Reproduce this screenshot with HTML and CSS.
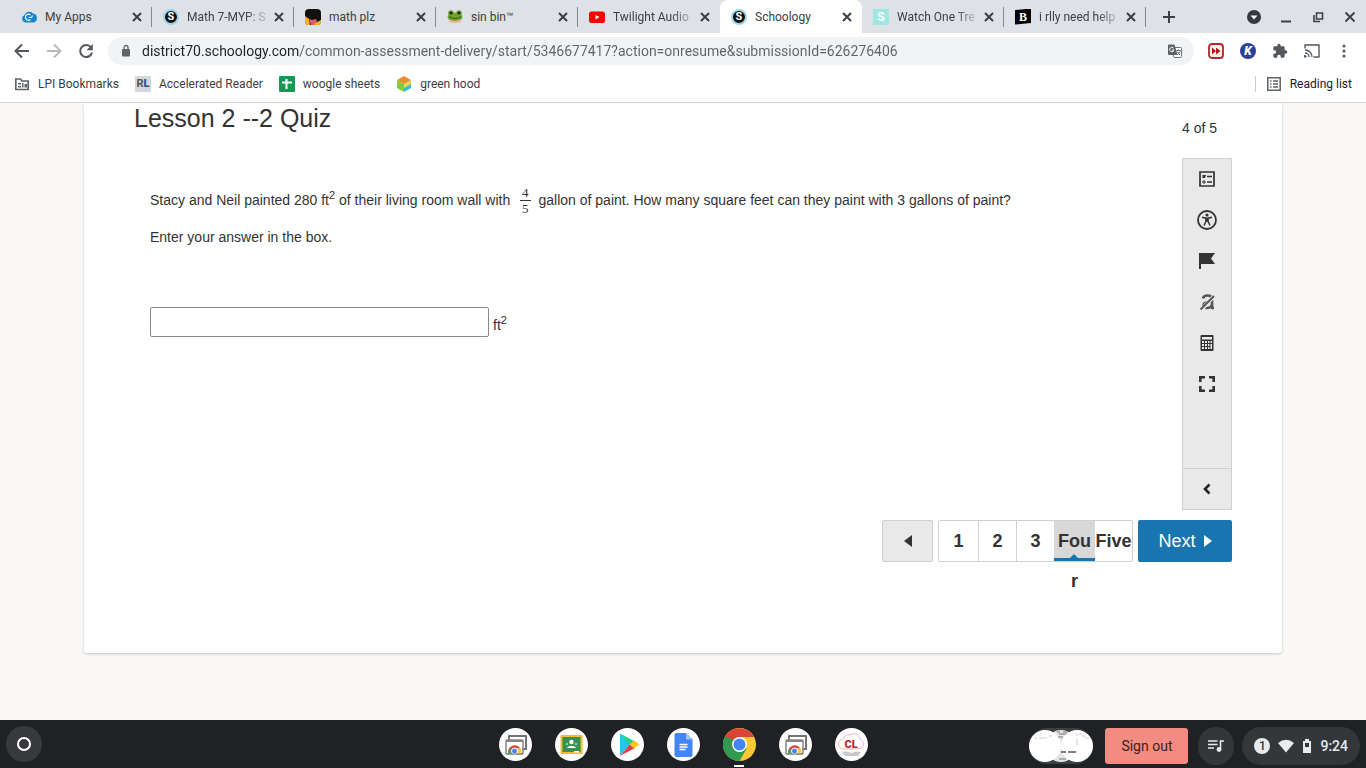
FILE: index.html
```html
<!DOCTYPE html>
<html lang="en">
<head>
    <meta charset="UTF-8">
    <meta name="viewport" content="width=device-width, initial-scale=1.0">
    <title>Schoology</title>
    <link rel="stylesheet" href="styles.css">
</head>
<body>
    <!-- Shared shapes -->
    <svg class="defs" width="0" height="0" aria-hidden="true">
        <symbol id="x" viewBox="0 0 16 16"><path d="M4 4l8 8M12 4l-8 8" stroke="currentColor" stroke-width="2" fill="none"/></symbol>
        <symbol id="webstore" viewBox="0 0 33 33">
            <circle cx="16.500" cy="16.500" r="16.500" fill="#fff"/>
            <path d="M10 12V8h17v13h-3" fill="none" stroke="#757575" stroke-width="2"/>
            <rect x="7" y="12" width="17" height="14" rx="1" fill="#fff" stroke="#858585" stroke-width="1.500"/>
            <path d="M7 13h17" stroke="#858585" stroke-width="2"/>
            <path d="M9 25.500a6.500 6.500 0 0 1 1.500-5.500l5 5.500z" fill="#4a9f58"/>
            <path d="M10 20.500a6.800 6.800 0 0 1 11.500 0H15l-2 3z" fill="#db4437"/>
            <path d="M16 20.500h5.500a7 7 0 0 1 1 5H15z" fill="#fcc934"/>
            <circle cx="15.500" cy="23" r="3" fill="#4285f4" stroke="#fff"/>
            <path d="M7 26h17" stroke="#858585" stroke-width="1"/>
        </symbol>
    </svg>

    <header class="browser">
        <div class="tabs">
            <div class="tab">
                <svg class="fav" viewBox="0 0 16 16"><path d="M4 13.500a4 4 0 0 1-.5-7.500A5 5 0 0 1 12 4.500a4.600 4.600 0 0 1 .5 9z" fill="#1287cf"/><path d="M9.500 6a3 3 0 1 0 0 4.500M7.500 8.500h3l1-2" fill="none" stroke="#fff" stroke-width="1.100"/></svg>
                <a class="title" href="#">My Apps</a>
                <button class="close" aria-label="Close My Apps"><svg><use href="#x"/></svg></button>
            </div>
            <div class="tab">
                <span class="fav fav-s">S</span>
                <a class="title fade" href="#">Math 7-MYP: S</a>
                <button class="close" aria-label="Close Math 7-MYP"><svg><use href="#x"/></svg></button>
            </div>
            <div class="tab">
                <svg class="fav" viewBox="0 0 16 16"><rect width="16" height="16" rx="4" fill="#111"/><path d="M0 7l4 3 1 6H3a3 3 0 0 1-3-3z" fill="#f6b21c"/><path d="M4 10l3 1 4-1 1 2-3 4H6z" fill="#e4587d"/><path d="M10 14l6-3v2a3 3 0 0 1-3 3H9z" fill="#f6b21c"/></svg>
                <a class="title" href="#">math plz</a>
                <button class="close" aria-label="Close math plz"><svg><use href="#x"/></svg></button>
            </div>
            <div class="tab">
                <svg class="fav" viewBox="0 0 16 16"><ellipse cx="8" cy="8" rx="7.500" ry="4.500" fill="#6fa82e"/><circle cx="4" cy="4" r="2.800" fill="#6fa82e"/><circle cx="12" cy="4" r="2.800" fill="#6fa82e"/><circle cx="4" cy="4" r="1.600" fill="#222"/><circle cx="12" cy="4" r="1.600" fill="#222"/><path d="M2 7.500q6 4 12 0" fill="none" stroke="#33551a"/><path d="M2 11.500q6 3 12 0" fill="none" stroke="#f0b490" stroke-width="2"/></svg>
                <a class="title" href="#">sin bin™</a>
                <button class="close" aria-label="Close sin bin"><svg><use href="#x"/></svg></button>
            </div>
            <div class="tab">
                <svg class="fav" viewBox="0 0 16 16"><rect y="2.500" width="16" height="11.500" rx="2.500" fill="#f00"/><path d="M6.500 6v4.500L10.500 8z" fill="#fff"/></svg>
                <a class="title fade" href="#">Twilight Audio</a>
                <button class="close" aria-label="Close Twilight Audio"><svg><use href="#x"/></svg></button>
            </div>
            <div class="tab active">
                <span class="fav fav-s">S</span>
                <a class="title" href="#">Schoology</a>
                <button class="close" aria-label="Close Schoology"><svg><use href="#x"/></svg></button>
            </div>
            <div class="tab">
                <span class="fav fav-mint">S</span>
                <a class="title fade" href="#">Watch One Tre</a>
                <button class="close" aria-label="Close Watch One Tree"><svg><use href="#x"/></svg></button>
            </div>
            <div class="tab">
                <span class="fav fav-b">B</span>
                <a class="title fade" href="#">i rlly need help</a>
                <button class="close" aria-label="Close i rlly need help"><svg><use href="#x"/></svg></button>
            </div>
            <button class="new-tab" aria-label="New tab"><svg viewBox="0 0 16 16"><path d="M8 2v12M2 8h12" stroke="currentColor" stroke-width="2"/></svg></button>
            <div class="window-buttons">
                <button aria-label="Search tabs"><svg viewBox="0 0 16 16"><circle cx="8" cy="8" r="7" fill="#35383c"/><path d="M4.500 6.500h7L8 10.500z" fill="#fff"/></svg></button>
                <button aria-label="Minimize"><svg viewBox="0 0 16 16"><path d="M3 12.500h10" stroke="currentColor" stroke-width="2"/></svg></button>
                <button aria-label="Restore"><svg viewBox="0 0 16 16"><path d="M6.500 4h6v6h-6zM4 6v6.500h6" fill="none" stroke="currentColor" stroke-width="1.600"/></svg></button>
                <button aria-label="Close window"><svg viewBox="0 0 16 16"><path d="M3.500 3.500l9 9M12.500 3.500l-9 9" stroke="currentColor" stroke-width="1.800"/></svg></button>
            </div>
        </div>

        <div class="toolbar">
            <button aria-label="Back"><svg viewBox="0 0 16 16"><path d="M15 8H2M8 1.500L1.500 8 8 14.500" fill="none" stroke="currentColor" stroke-width="2"/></svg></button>
            <button aria-label="Forward" disabled><svg viewBox="0 0 16 16"><path d="M1 8h13M8 1.500L14.500 8 8 14.500" fill="none" stroke="currentColor" stroke-width="2"/></svg></button>
            <button aria-label="Reload"><svg viewBox="0 0 16 16"><path d="M13 4.500A6 6 0 1 0 14 9.500" fill="none" stroke="currentColor" stroke-width="2"/><path d="M14.800 1v6.300H8.500z" fill="currentColor"/></svg></button>
            <div class="omnibox">
                <svg class="lock" viewBox="0 0 12 14"><rect x="2" y="5" width="8" height="7.500" rx="1" fill="#5f6368"/><path d="M4 5V3.500a2 2 0 0 1 4 0V5" fill="none" stroke="#5f6368" stroke-width="1.300"/></svg>
                <input class="url" type="text" aria-label="Address" value="district70.schoology.com/common-assessment-delivery/start/5346677417?action=onresume&amp;submissionId=626276406">
                <button aria-label="Translate"><svg viewBox="0 0 16 16"><rect x="6.500" y="4.500" width="8" height="10" rx="1" fill="#fff" stroke="#6b6f73"/><path d="M2 1.500h5.500l3 10.500H2a1 1 0 0 1-1-1V2.500a1 1 0 0 1 1-1z" fill="#5f6368"/><path d="M6.500 5a2.200 2.200 0 1 0 .5 2H5" fill="none" stroke="#fff"/><path d="M9.500 7.500h4M11.500 6.500v1M10 8.500l3 3.500M13 8.500L10.500 12" fill="none" stroke="#5f6368"/></svg></button>
            </div>
            <div class="extensions">
                <button aria-label="Video speed"><svg viewBox="0 0 16 16"><rect x="1" y="1" width="14" height="14" rx="3" fill="#fff5ee" stroke="#b3262b" stroke-width="1.800"/><path d="M4 4.500L8 8l-4 3.500zM8 4.500L12.500 8 8 11.500z" fill="#b3161b"/></svg></button>
                <button aria-label="Kami"><span class="kami">K</span></button>
                <button aria-label="Extensions"><svg viewBox="0 0 24 24"><path fill="#54585c" d="M20.500 11H19V7c0-1.100-.9-2-2-2h-4V3.500a2.500 2.500 0 0 0-5 0V5H4c-1.100 0-2 .9-2 2v3.800h1.500a2.700 2.700 0 0 1 0 5.400H2V20c0 1.100.9 2 2 2h3.800v-1.500a2.700 2.700 0 0 1 5.400 0V22H17c1.100 0 2-.9 2-2v-4h1.500a2.500 2.500 0 0 0 0-5z"/></svg></button>
                <button aria-label="Cast"><svg viewBox="0 0 16 16"><path d="M1 5.500V2h14v12H9.500M1 7a7 7 0 0 1 7 7M1 10a4 4 0 0 1 4 4" fill="none" stroke="currentColor" stroke-width="1.400"/><path d="M0 12a2 2 0 0 1 2.500 2.500H0z" fill="currentColor"/></svg></button>
                <button aria-label="Menu"><svg viewBox="0 0 16 16"><circle cx="8" cy="3" r="1.500"/><circle cx="8" cy="8" r="1.500"/><circle cx="8" cy="13" r="1.500"/></svg></button>
            </div>
        </div>

        <nav class="bookmarks">
            <a href="#"><svg viewBox="0 0 16 16"><path d="M1.800 3h4.700l1.500 2h6.200v8.500H1.800z" fill="none" stroke="#5f6368" stroke-width="1.700"/><path d="M4 7h3v1.500H4zM4 10h3v1.500H4zM8 7h1.500v4.500H8zM10.500 8H13v3.500h-2.500z" fill="#5f6368"/></svg>LPI Bookmarks</a>
            <a href="#"><span class="rl">R<b>L</b></span>Accelerated Reader</a>
            <a href="#"><svg viewBox="0 0 16 16"><rect width="16" height="16" rx="1" fill="#159a56"/><path d="M3 6.500h10M7.500 3v10" stroke="#fff" stroke-width="2"/></svg>woogle sheets</a>
            <a href="#"><svg viewBox="0 0 16 16"><path d="M8 0l7 4-7 4-7-4z" fill="#f08a32"/><path d="M1 4l7 4v8l-7-4z" fill="#7fcb38"/><path d="M15 4L8 8v8l7-4z" fill="#2dbde5"/><path d="M8 8l7-4v4l-7 4z" fill="#f6d64a"/></svg>green hood</a>
            <button class="reading-list"><svg viewBox="0 0 16 16"><path d="M1.800 1.800h12.400v12.400H1.800z" fill="none" stroke="#5f6368" stroke-width="1.500"/><path d="M4 5h1.500M7 5h5M4 8h1.500M7 8h5M4 11h1.500M7 11h5" stroke="#5f6368" stroke-width="1.400"/></svg>Reading list</button>
        </nav>
    </header>

    <main class="page">
        <section class="card">
            <div class="card-head">
                <h1>Lesson 2 --2 Quiz</h1>
                <span class="count">4 of 5</span>
            </div>
            <div class="card-body">
                <div class="question">
                    <p>Stacy and Neil painted 280 ft<sup>2</sup> of their living room wall with <span class="fraction"><span>4</span><span>5</span></span> gallon of paint. How many square feet can they paint with 3 gallons of paint?</p>
                    <p><label for="answer">Enter your answer in the box.</label></p>
                    <div class="answer">
                        <input type="text" id="answer">
                        <span>ft<sup>2</sup></span>
                    </div>
                </div>
                <div class="tools">
                    <button aria-label="Review"><svg viewBox="0 0 20 20"><path d="M3 3h14v14H3z" fill="none" stroke="#333" stroke-width="1.700"/><path d="M5.500 6H9L8 9H5.500z" fill="#333"/><path d="M6 12h2v2H6z" fill="none" stroke="#333"/><path d="M10 7.500h5M10 13h5" stroke="#333" stroke-width="1.400"/></svg></button>
                    <button aria-label="Accessibility"><svg viewBox="0 0 20 20"><circle cx="10" cy="10" r="9" fill="none" stroke="#333" stroke-width="1.800"/><circle cx="10" cy="5" r="1.600" fill="#333"/><path d="M5 7.200l4 1v3L7 15.500M15 7.200l-4 1v3l2 4.300" fill="none" stroke="#333" stroke-width="1.500"/><path d="M8.500 7.800h3v4h-3z" fill="#333"/></svg></button>
                    <button aria-label="Flag"><svg viewBox="0 0 20 20"><path d="M2 2h16l-4 5.500 4 5.500H4v5H2z" fill="#333"/></svg></button>
                    <button aria-label="Clear answer"><svg viewBox="0 0 20 20"><path d="M6 6.500q.5-3 4.500-3 4.500 0 4.500 4V16M15 9.500q-8 0-8.500 3.500 0 3 3.500 3 3.500 0 5-3M14 16h3" fill="none" stroke="#555" stroke-width="2.600"/><path d="M4 18L18 3" stroke="#e9e9e9" stroke-width="4"/><path d="M3.500 17.500L17 4" stroke="#555" stroke-width="2"/></svg></button>
                    <button aria-label="Calculator"><svg viewBox="0 0 20 20"><rect x="3.500" y="2" width="13" height="16" rx="1" fill="#333"/><path d="M5 4h10v2.500H5zM5 8h2v2H5zM8 8h2v2H8zM11 8h1.500v2H11zM13.500 8H15v2h-1.500zM5 11h2v2H5zM8 11h2v2H8zM11 11h1.500v2H11zM5 14h2v2H5zM8 14h2v2H8zM11 14h1.500v2H11zM13.500 11H15v5h-1.500z" fill="#e9e9e9"/></svg></button>
                    <button aria-label="Full screen"><svg viewBox="0 0 20 20"><path d="M8 3.300H3.300V8M12 3.300h4.700V8M8 16.700H3.300V12M12 16.700h4.700V12" fill="none" stroke="#333" stroke-width="2.600"/></svg></button>
                    <button class="collapse" aria-label="Collapse toolbar"><svg viewBox="0 0 20 20"><path d="M12.500 5.500L8 10l4.500 4.500" fill="none" stroke="#222" stroke-width="2.600"/></svg></button>
                </div>
            </div>
            <nav class="pager">
                <a class="prev" href="#" aria-label="Previous"><svg viewBox="0 0 8 12"><path d="M8 0v12L0 6z" fill="#333"/></svg></a>
                <div class="pages">
                    <a href="#">1</a>
                    <a href="#">2</a>
                    <a href="#">3</a>
                    <a class="current" href="#">Four</a>
                    <a href="#">Five</a>
                </div>
                <a class="next" href="#">Next <svg viewBox="0 0 8 12"><path d="M0 0v12l8-6z" fill="#fff"/></svg></a>
            </nav>
        </section>
    </main>

    <footer class="shelf">
        <button class="launcher" aria-label="Launcher"><svg viewBox="0 0 16 16"><circle cx="8" cy="8" r="6" fill="none" stroke="#fff" stroke-width="2"/></svg></button>
        <div class="apps">
            <button aria-label="Web Store"><svg><use href="#webstore"/></svg></button>
            <button aria-label="Classroom"><svg viewBox="0 0 33 33"><circle cx="16.500" cy="16.500" r="16.500" fill="#fff"/><rect x="5.500" y="7" width="22" height="19" rx="1" fill="#efbd2f"/><rect x="7.500" y="9" width="18" height="15" fill="#3a8f4f"/><circle cx="16.500" cy="14" r="2.200" fill="#fff"/><path d="M11.500 20q5-4.500 10 0z" fill="#fff"/><circle cx="12" cy="16" r="1.300" fill="#8fc6a5"/><circle cx="21" cy="16" r="1.300" fill="#8fc6a5"/><path d="M19 23h5v1.500h-5z" fill="#fff"/></svg></button>
            <button aria-label="Play Store"><svg viewBox="0 0 33 33"><circle cx="16.500" cy="16.500" r="16.500" fill="#fff"/><path d="M9 5.500v22l10-11z" fill="#25c6ee"/><path d="M9 5.500l15 8-5 4z" fill="#20d48a"/><path d="M9 28l15-8-5-4z" fill="#e83d4e"/><path d="M23 12.500l5.500 4-5.500 4-4.500-4z" fill="#fcc51b"/></svg></button>
            <button aria-label="Docs"><svg viewBox="0 0 33 33"><circle cx="16.500" cy="16.500" r="16.500" fill="#fff"/><path d="M9.500 5H19l6.500 6.500V27a2 2 0 0 1-2 2h-14a2 2 0 0 1-2-2V7a2 2 0 0 1 2-2z" fill="#4285f4"/><path d="M19 5l6.500 6.500H19z" fill="#a1c2fa"/><path d="M12.500 16.500h8M12.500 19h8M12.500 21.500h6" stroke="#fff" stroke-width="1.300"/></svg></button>
            <button class="open" aria-label="Chrome"><svg viewBox="0 0 33 33"><circle cx="16.500" cy="16.500" r="16.500" fill="#fcc934"/><path d="M16.500 16.500L2.200 8.200A16.500 16.500 0 0 0 16.500 33l7.200-12.400z" fill="#2f9a50"/><path d="M2.200 8.200A16.500 16.500 0 0 1 31 9H16.500l-7.200 12z" fill="#db4437"/><path d="M2.200 8.200l7.200 12.400 3-8z" fill="#2f9a50"/><circle cx="16.500" cy="16.500" r="7.500" fill="#fff"/><circle cx="16.500" cy="16.500" r="6" fill="#4285f4"/></svg></button>
            <button aria-label="Web Store"><svg><use href="#webstore"/></svg></button>
            <button class="cl" aria-label="CL"><svg viewBox="0 0 33 33"><circle cx="16.500" cy="16.500" r="16.500" fill="#fff"/><path d="M9 21a5 5 0 0 1-1-10q2-5 7-4 7-4 10 4 5 2 3 7-1 3-4 3z" fill="#fff" stroke="#f2b3bd"/><path d="M7 24q5-1.500 9.500 1 4.500-2.500 9.500-1l-3 4H10z" fill="#c9c9c9"/></svg><span>CL</span></button>
        </div>
        <div class="tray">
            <button class="captures" aria-label="Screen captures">
                <svg viewBox="0 0 64 36"><rect width="64" height="36" rx="18" fill="#3c4043"/><circle cx="32" cy="18" r="16" fill="#e4e4e4"/><path d="M28 4h3M34 4h4M30 6h8M25 9h9M30 31h7M40 31h4" stroke="#777"/><circle cx="48" cy="18" r="16" fill="#fff"/><circle cx="16" cy="18" r="16" fill="#fff"/><path d="M5 10h3M10 10h8M20 8h3M48 5v3M50 6h3M48 11v6M53 8h4M56 10h4" stroke="#ccc"/><path d="M32 24h5M39 24h8" stroke="#555" stroke-width="1.500"/></svg>
            </button>
            <button class="sign-out">Sign out</button>
            <button class="media" aria-label="Media controls"><svg viewBox="0 0 16 16"><path d="M0 3h9.500M0 6.500h9.500M0 10h6M12.500 11.500V3H16" fill="none" stroke="#e8eaed" stroke-width="1.600"/><circle cx="11" cy="11.500" r="2.400" fill="#e8eaed"/></svg></button>
            <button class="status">
                <span class="badge">1</span>
                <svg viewBox="0 0 16 16"><path d="M0 5q8-6.500 16 0L8 14.500z" fill="#e8eaed"/></svg>
                <svg class="battery" viewBox="0 0 10 16"><path d="M3 1h4v2h2v12H1V3h2z" fill="#e8eaed"/><path d="M3 5h4v4H3z" fill="#35363a"/></svg>
                <span>9:24</span>
            </button>
        </div>
    </footer>
</body>
</html>
```

FILE: styles.css
```css
* { box-sizing: border-box; }
body {
    margin: 0;
    min-height: 100vh;
    display: flex;
    flex-direction: column;
    background: #faf9f7;
    color: #333;
    font-family: "Liberation Sans", Arial, sans-serif;
    font-size: 14px;
}
button {
    display: flex;
    align-items: center;
    justify-content: center;
    margin: 0;
    padding: 0;
    border: 0;
    background: none;
    color: inherit;
    font: inherit;
    cursor: pointer;
}
a { color: inherit; text-decoration: none; }
svg { display: block; flex: none; width: 16px; height: 16px; }
svg.defs { position: absolute; width: 0; height: 0; }

/* Browser frame */
.browser {
    background: #fff;
    border-bottom: 1px solid #d5d6d8;
    color: #3c4043;
    font-family: Roboto, sans-serif;
    font-size: 12px;
}
.tabs {
    display: flex;
    height: 33px;
    padding: 0 8px 0 10px;
    background: #dee1e6;
}
.tab {
    display: flex;
    flex: 0 1 142px;
    min-width: 0;
    align-items: center;
    gap: 8px;
    padding: 0 7px 0 11px;
    background: linear-gradient(#85888c, #85888c) right center / 1px 20px no-repeat;
}
.tab:has(+ .active) { background: none; }
.tab.active { background: #fff; border-radius: 8px 8px 0 0; }
.fav { width: 16px; height: 16px; flex: none; text-align: center; }
.fav-s {
    border: 2px solid #9bd7e6;
    border-radius: 50%;
    background: #111;
    color: #fff;
    font-size: 11px;
    font-weight: bold;
    line-height: 12px;
}
.fav-mint { background: #9ee8e1; color: #fff; font-weight: bold; line-height: 16px; }
.fav-b {
    background: #000;
    color: #fff;
    font-family: "Liberation Serif", serif;
    font-weight: bold;
    line-height: 16px;
    clip-path: polygon(0 10%, 100% 0, 100% 90%, 0 100%);
}
.title {
    flex: 1;
    white-space: nowrap;
}
.title.fade { mask-image: linear-gradient(to right, #000 calc(100% - 26px), transparent); }
.close { margin-left: -8px; }
.new-tab { width: 46px; }
.window-buttons { display: flex; gap: 16px; margin-left: auto; }

.toolbar {
    display: flex;
    align-items: center;
    gap: 16px;
    height: 36px;
    padding: 0 14px;
    color: #54585c;
    fill: #54585c;
}
.toolbar button:disabled { color: #b8babd; }
.omnibox {
    display: flex;
    flex: 1;
    align-items: center;
    gap: 10px;
    height: 28px;
    margin-right: -2px;
    margin-left: -2px;
    padding: 0 11px 0 12px;
    border-radius: 14px;
    background: #f1f3f4;
}
.lock { width: 12px; height: 14px; }
.url {
    flex: 1;
    min-width: 0;
    padding: 0;
    border: 0;
    outline: 0;
    background: linear-gradient(to right, #202124 158px, #5f6368 158px);
    background-clip: text;
    color: transparent;
    font: 14px/20px Roboto, sans-serif;
}
.extensions { display: flex; gap: 16px; }
.kami {
    width: 16px;
    border-radius: 50%;
    background: #2b3f9b;
    color: #fff;
    font-size: 12px;
    font-style: italic;
    font-weight: 900;
    line-height: 16px;
}

.bookmarks {
    display: flex;
    align-items: center;
    gap: 16px;
    height: 33px;
    padding: 0 14px 4px;
}
.bookmarks a { display: flex; align-items: center; gap: 8px; }
.rl {
    width: 16px;
    background: #d5d7da;
    color: #555;
    font-size: 11px;
    font-weight: bold;
    line-height: 16px;
    text-align: center;
}
.rl b { color: #205a94; }
.bookmarks .reading-list {
    gap: 8px;
    margin-left: auto;
    padding-left: 10px;
    border-left: 1px solid #ccc;
    color: #202124;
}

/* Quiz */
.page { flex: 1; padding: 0 84px; }
.card {
    padding: 0 50px 91px;
    border-radius: 0 0 3px 3px;
    background: #fff;
    box-shadow: 0 1px 3px rgba(0,0,0,0.2);
}
.card-head { display: flex; justify-content: space-between; height: 55px; }
h1 {
    margin: 0;
    font-size: 25px;
    font-weight: normal;
    line-height: 30px;
}
.count { padding: 16px 15px 0 0; line-height: 18px; }
.card-body { display: flex; justify-content: space-between; gap: 16px; }
.question { padding: 27px 0 0 16px; }
.question p { margin: 0; line-height: 20px; }
.question p + p { margin-top: 11px; }
sup { font-size: 11px; line-height: 0; }
.fraction {
    display: inline-flex;
    flex-direction: column;
    margin: 0 4px 0 6px;
    font: 13px/15px "Liberation Serif", serif;
    text-align: center;
    vertical-align: 8px;
}
.fraction span { padding: 0 2px; }
.fraction span + span { border-top: 1px solid #333; }
.answer { display: flex; align-items: center; gap: 4px; margin-top: 60px; }
.answer input {
    width: 339px;
    height: 30px;
    padding: 4px 8px;
    border: 1px solid #8a8a8a;
    border-radius: 2px;
    font: inherit;
}
.answer span { padding-top: 6px; }

.tools {
    display: flex;
    flex: none;
    flex-direction: column;
    width: 50px;
    height: 352px;
    border: 1px solid #d0d0d0;
    background: #e9e9e9;
}
.tools button { height: 41px; padding-bottom: 2px; }
.tools svg { width: 20px; height: 20px; }
.tools .collapse { margin-top: auto; padding: 0; border-top: 1px solid #d0d0d0; }

.pager {
    display: flex;
    justify-content: flex-end;
    gap: 5px;
    height: 42px;
    margin-top: 10px;
    font-size: 18px;
    line-height: 40px;
}
.pager svg { width: 8px; height: 14px; }
.prev, .next {
    display: flex;
    align-items: center;
    justify-content: center;
    gap: 8px;
    border-radius: 2px;
}
.prev { width: 51px; border: 1px solid #d0d0d0; background: #e9e9e9; }
.next { width: 94px; background: #1975b0; color: #fff; }
.pages {
    display: grid;
    grid-template-columns: 39px 38px 38px 41px 37px;
    border: 1px solid #d0d0d0;
    border-radius: 2px;
    font-weight: bold;
    text-align: center;
}
.pages a { height: 40px; }
.pages a + a { border-left: 1px solid #d0d0d0; }
.pages .current {
    position: relative;
    padding: 0 2px;
    border: 0;
    background: #d8d8d8;
    word-break: break-all;
}
.pages .current + a { border: 0; }
/* Blue marker under the open question */
.current::before {
    content: "";
    position: absolute;
    inset: auto 0 0;
    height: 7px;
    background: #1975b0;
    clip-path: polygon(0 4px, 16px 4px, 20px 0, 24px 4px, 100% 4px, 100% 100%, 0 100%);
}

/* Shelf */
.shelf {
    display: grid;
    grid-template-columns: 1fr auto 1fr;
    align-items: center;
    height: 48px;
    padding: 0 6px;
    background: #202124;
    color: #e8eaed;
    font-family: Roboto, sans-serif;
}
.launcher { width: 36px; height: 36px; border-radius: 50%; background: #38393c; }
.apps { display: flex; gap: 23px; }
.apps button { position: relative; }
.apps svg { width: 33px; height: 33px; }
.apps .open::after {
    content: "";
    position: absolute;
    bottom: -6px;
    width: 10px;
    height: 2px;
    background: #fff;
}
.cl span { position: absolute; color: #c5262d; font-size: 11px; font-weight: 900; }
.tray { display: flex; align-items: center; justify-content: flex-end; padding-top: 4px; }
.captures svg { width: 64px; height: 36px; }
.sign-out {
    width: 83px;
    height: 36px;
    margin: 0 10px 0 12px;
    border-radius: 3px;
    background: #f28b82;
    color: #3a2220;
}
.media { width: 36px; height: 38px; margin-right: 8px; border-radius: 19px; background: #35363a; }
.status {
    gap: 8px;
    height: 38px;
    padding: 0 12px;
    border-radius: 19px;
    background: #35363a;
    font-weight: 500;
}
.battery { width: 10px; }
.badge {
    width: 16px;
    border-radius: 50%;
    background: #e8eaed;
    color: #35363a;
    font-size: 12px;
    line-height: 16px;
}
```
